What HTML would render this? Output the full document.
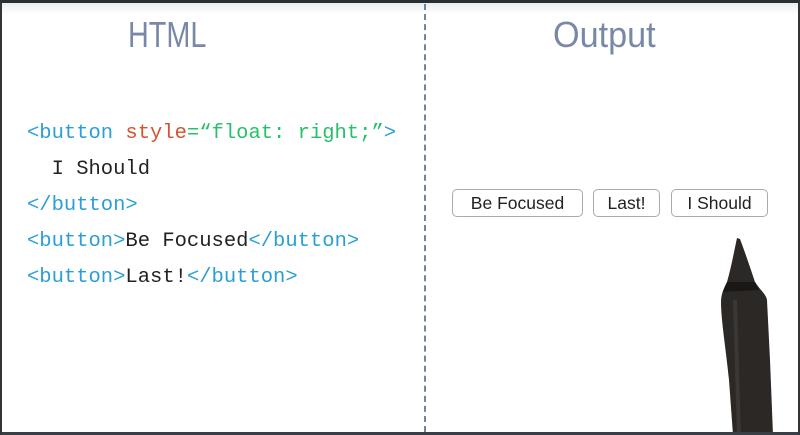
<!DOCTYPE html>
<html><head><style>
body{margin:0;width:800px;height:435px;overflow:hidden;background:#fff;position:relative;font-family:"Liberation Sans",sans-serif}
.frame{position:absolute;inset:0;border:2px solid #333;border-top:3px solid #2a2f36;border-bottom:3px solid #3a3f46;box-sizing:border-box}
.top{position:absolute;left:0;top:0;width:800px;height:14px;background:linear-gradient(#e4e6e8,#fff)}
.t{position:absolute;top:14px;font-family:"Liberation Sans Narrow","Liberation Sans",sans-serif;font-size:36px;color:#7a88a8;transform:scaleX(.8);transform-origin:left top}
.dash{position:absolute;left:424px;top:4px;height:428px;border-left:2px dashed #6f86a0}
.code{position:absolute;left:27px;top:116px;font-family:"Liberation Mono",monospace;font-size:20.5px;line-height:36px;color:#222;white-space:pre}
.b{color:#2a9fd6}.r{color:#d0552e}.g{color:#27c06a}
.btn{position:absolute;top:189px;height:28px;border:1px solid #aaa;border-radius:5px;box-sizing:border-box;font-size:17.5px;line-height:26px;text-align:center;color:#222}
</style></head><body>
<div class="top"></div>
<div class="t" style="left:128px">HTML</div>
<div class="t" style="left:553px;transform:scaleX(.95)">Output</div>
<div class="dash"></div>
<div class="code"><span class="b">&lt;button </span><span class="r">style</span><span class="g">=“float: right;”</span><span class="b">&gt;</span>
  I Should
<span class="b">&lt;/button&gt;</span>
<span class="b">&lt;button&gt;</span>Be Focused<span class="b">&lt;/button&gt;</span>
<span class="b">&lt;button&gt;</span>Last!<span class="b">&lt;/button&gt;</span></div>
<div class="btn" style="left:452px;width:131px">Be Focused</div>
<div class="btn" style="left:593px;width:67px">Last!</div>
<div class="btn" style="left:671px;width:97px">I Should</div>
<svg style="position:absolute;left:0;top:0" width="800" height="435">
<path d="M737,238 L740,239 C746,255 751,270 755,282 C760,290 766,294 767,300 L770,360 L773,435 L733,435 L729,380 C726,350 721,320 721,302 C721,294 724,288 727,282 C731,268 734,252 737,238 Z" fill="#2b2826"/>
<path d="M727,282 L755,282 L759,290 L723,292 Z" fill="#1a1817"/>
<path d="M733,300 L737,300 L741,435 L737,435 Z" fill="#3a3735"/>
</svg>
<div class="frame"></div>
</body></html>
